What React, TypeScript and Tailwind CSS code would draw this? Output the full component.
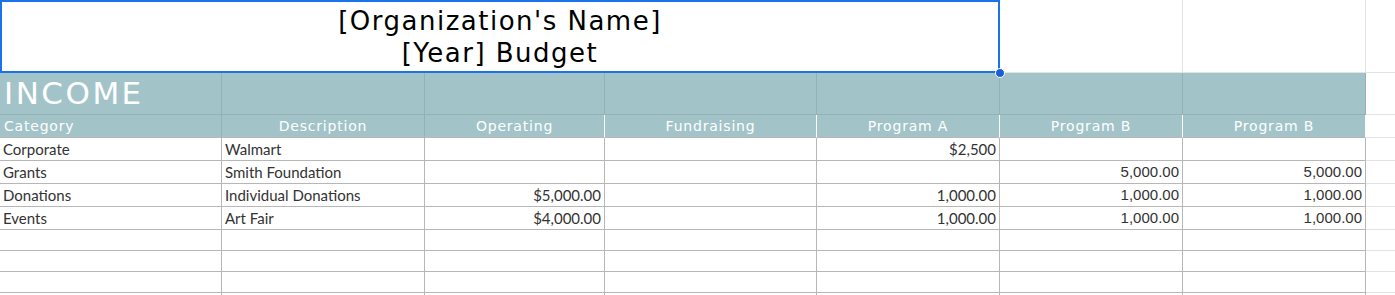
const cols = [222, 203, 180, 212, 183, 183, 183];

type Cell = { text?: string; align?: "left" | "right"; font?: "lato" | "arial" };

const rows: Cell[][] = [
  [
    { text: "Corporate" },
    { text: "Walmart" },
    {},
    {},
    { text: "$2,500", align: "right" },
    {},
    {},
  ],
  [
    { text: "Grants" },
    { text: "Smith Foundation" },
    {},
    {},
    {},
    { text: "5,000.00", align: "right", font: "arial" },
    { text: "5,000.00", align: "right", font: "arial" },
  ],
  [
    { text: "Donations" },
    { text: "Individual Donations" },
    { text: "$5,000.00", align: "right" },
    {},
    { text: "1,000.00", align: "right" },
    { text: "1,000.00", align: "right", font: "arial" },
    { text: "1,000.00", align: "right", font: "arial" },
  ],
  [
    { text: "Events" },
    { text: "Art Fair" },
    { text: "$4,000.00", align: "right" },
    {},
    { text: "1,000.00", align: "right" },
    { text: "1,000.00", align: "right", font: "arial" },
    { text: "1,000.00", align: "right", font: "arial" },
  ],
];

const headers = ["Category", "Description", "Operating", "Fundraising", "Program A", "Program B", "Program B"];

const titleFont = { fontFamily: '"DejaVu Sans", sans-serif' };

export default function App() {
  return (
    <div className="relative w-[1395px] h-[295px] overflow-hidden bg-white">
      {/* Title row */}
      <div className="flex h-[73px]">
        <div
          className="w-[1000px] shrink-0 border-2 border-[#1a73e8] flex flex-col items-center justify-center text-[26px] leading-[32px] tracking-[1.5px] text-black"
          style={titleFont}
        >
          <span>[Organization's Name]</span>
          <span>[Year] Budget</span>
        </div>
        <div className="w-[183px] shrink-0 border-r border-b border-[#e2e3e3]" />
        <div className="w-[183px] shrink-0 border-r border-b border-[#e2e3e3]" />
        <div className="flex-1 border-b border-[#e2e3e3]" />
      </div>

      {/* Selection handle */}
      <div className="absolute left-[995px] top-[68px] w-[10px] h-[10px] rounded-full bg-[#1a5fd8] border border-white" />

      {/* INCOME row */}
      <div className="flex h-[42px]">
        {cols.map((w, i) => (
          <div
            key={i}
            style={{ width: w }}
            className="shrink-0 bg-[#a2c4c9] border-r border-b border-[#93b1b6] flex items-center"
          >
            {i === 0 && (
              <span className="pl-[4px] text-white text-[31px] leading-none tracking-[2.5px]" style={titleFont}>
                INCOME
              </span>
            )}
          </div>
        ))}
        <div className="flex-1 border-b border-[#e2e3e3]" />
      </div>

      {/* Header row */}
      <div className="flex h-[23px]">
        {cols.map((w, i) => (
          <div
            key={i}
            style={{ width: w, ...titleFont }}
            className={`shrink-0 bg-[#a2c4c9] border-r border-b border-b-[#b7b7b7] flex items-center text-white text-[14px] tracking-[0.8px] ${
              i < 2 ? "border-r-[#93b1b6]" : "border-r-white"
            } ${i === 0 ? "justify-start pl-[4px]" : "justify-center"}`}
          >
            {headers[i]}
          </div>
        ))}
        <div className="flex-1 border-b border-[#e2e3e3]" />
      </div>

      {/* Data rows */}
      {rows.map((row, r) => (
        <div key={r} className="flex h-[23px]">
          {row.map((c, i) => (
            <div
              key={i}
              style={{
                width: cols[i],
                fontFamily: c.font === "arial" ? '"Liberation Sans", sans-serif' : "Lato, sans-serif",
              }}
              className={`shrink-0 border-r border-b border-[#b7b7b7] flex items-end pb-[2px] text-[15px] leading-[18px] text-[#333333] ${
                c.align === "right" ? "justify-end pr-[3px]" : "justify-start pl-[3px]"
              }`}
            >
              {c.text}
            </div>
          ))}
          <div className="flex-1 border-b border-[#e2e3e3]" />
        </div>
      ))}

      {/* Empty rows */}
      {[0, 1, 2, 3].map((r) => (
        <div key={r} className="flex h-[21px]">
          {cols.map((w, i) => (
            <div key={i} style={{ width: w }} className="shrink-0 border-r border-b border-[#b7b7b7]" />
          ))}
          <div className="flex-1 border-b border-[#e2e3e3]" />
        </div>
      ))}
    </div>
  );
}
